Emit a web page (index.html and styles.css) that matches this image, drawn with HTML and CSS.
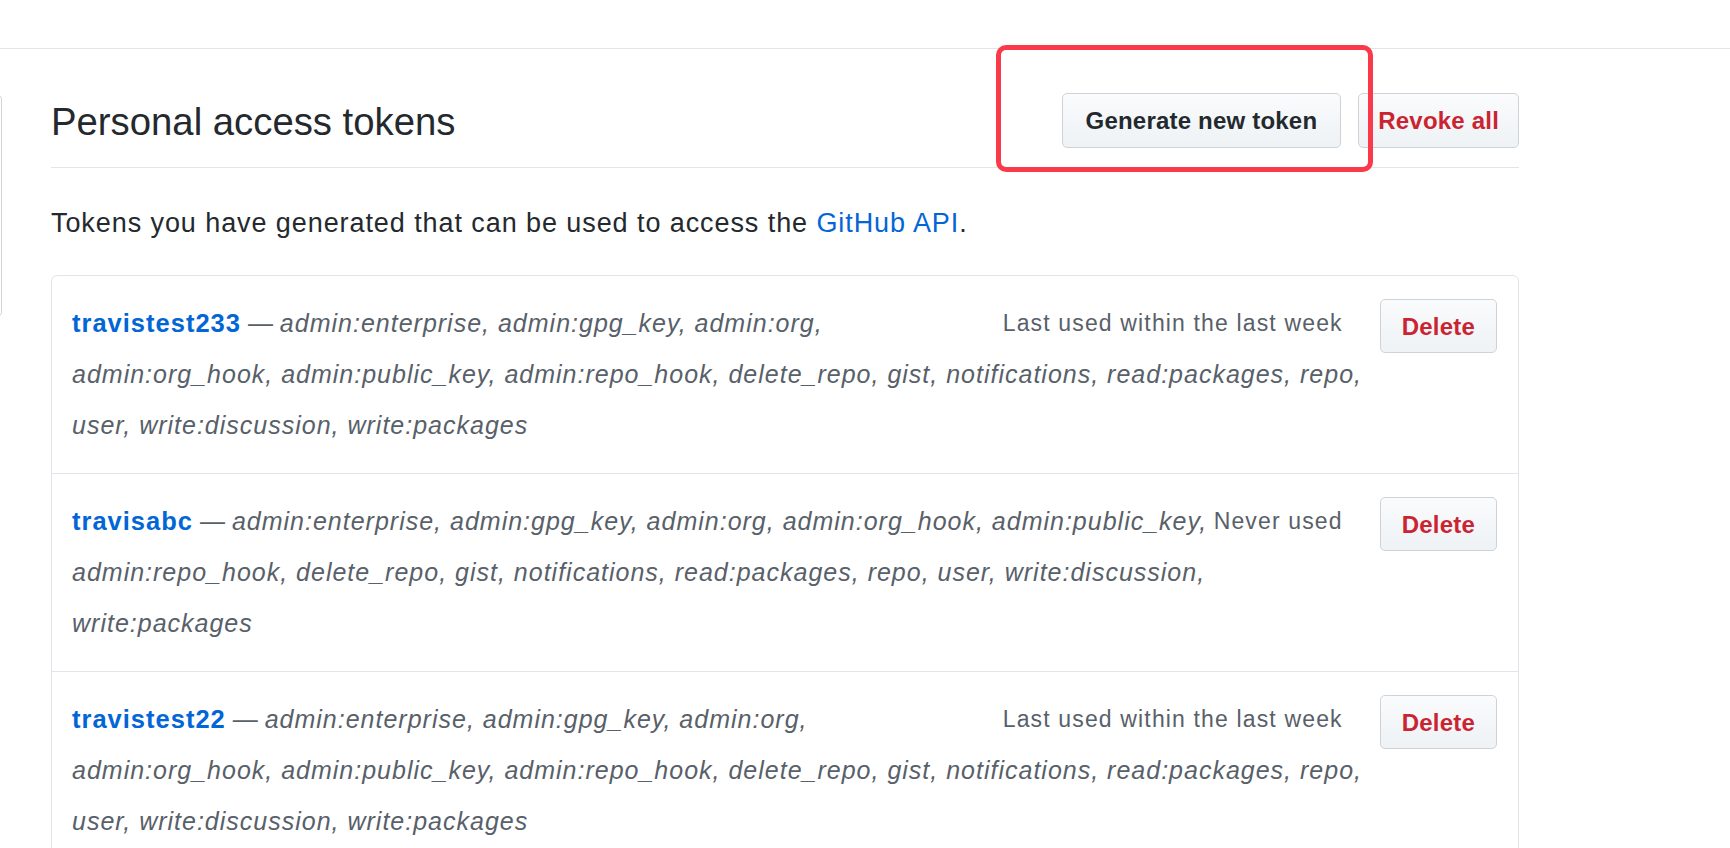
FILE: index.html
```html
<!DOCTYPE html>
<html lang="en">
<head>
<meta charset="utf-8">
<title>Personal access tokens</title>
<link rel="stylesheet" href="styles.css">
</head>
<body>
<header class="topbar"></header>
<div class="layout">
  <aside class="sidebar"></aside>
  <main class="main">
    <div class="subhead">
      <h2 class="subhead-heading">Personal access tokens</h2>
      <div class="subhead-actions">
        <a class="btn btn-generate">Generate new token</a>
        <a class="btn btn-danger btn-revoke">Revoke all</a>
      </div>
    </div>
    <p class="intro">Tokens you have generated that can be used to access the <a class="link">GitHub API</a>.</p>
    <div class="listgroup">
      <div class="token">
        <a class="btn btn-danger btn-delete">Delete</a>
        <span class="last-used">Last used within the last week</span>
        <div class="token-desc"><a class="token-name">travistest233</a> <span class="dash">—</span> <em class="scopes">admin:enterprise, admin:gpg_key, admin:org,<br>admin:org_hook, admin:public_key, admin:repo_hook, delete_repo, gist, notifications, read:packages, repo,<br>user, write:discussion, write:packages</em></div>
      </div>
      <div class="token">
        <a class="btn btn-danger btn-delete">Delete</a>
        <span class="last-used">Never used</span>
        <div class="token-desc"><a class="token-name">travisabc</a> <span class="dash">—</span> <em class="scopes">admin:enterprise, admin:gpg_key, admin:org, admin:org_hook, admin:public_key,<br>admin:repo_hook, delete_repo, gist, notifications, read:packages, repo, user, write:discussion,<br>write:packages</em></div>
      </div>
      <div class="token">
        <a class="btn btn-danger btn-delete">Delete</a>
        <span class="last-used">Last used within the last week</span>
        <div class="token-desc"><a class="token-name">travistest22</a> <span class="dash">—</span> <em class="scopes">admin:enterprise, admin:gpg_key, admin:org,<br>admin:org_hook, admin:public_key, admin:repo_hook, delete_repo, gist, notifications, read:packages, repo,<br>user, write:discussion, write:packages</em></div>
      </div>
    </div>
  </main>
</div>
<div class="annotation"></div>
</body>
</html>
```
FILE: styles.css
```css
html, body {
  margin: 0;
  padding: 0;
  background: #ffffff;
}

body {
  font-family: "Liberation Sans", Arial, sans-serif;
  color: #24292e;
  overflow: hidden;
  height: 848px;
  position: relative;
}

.topbar {
  height: 48px;
  border-bottom: 1px solid #e1e4e8;
}

.layout {
  display: flex;
  align-items: flex-start;
}

.sidebar {
  flex: none;
  width: 8px;
  height: 221px;
  margin-left: -8px;
  margin-top: 45px;
  border: 1px solid #d1d5da;
  border-radius: 6px;
}

.main {
  flex: none;
  width: 1468px;
  margin-left: 49px;
  padding-top: 44px;
}

.subhead {
  display: flex;
  align-items: center;
  padding-bottom: 19px;
  border-bottom: 1px solid #e1e4e8;
}

.subhead-heading {
  flex: 1;
  margin: 0;
  padding-top: 2px;
  font-size: 38.3px;
  font-weight: 400;
  line-height: 1.2;
  color: #24292e;
}

.subhead-actions {
  display: flex;
  gap: 17px;
}

.btn {
  display: inline-flex;
  align-items: center;
  justify-content: center;
  box-sizing: border-box;
  height: 55px;
  padding: 0 21px;
  font-size: 24px;
  font-weight: 700;
  letter-spacing: 0.2px;
  color: #24292e;
  background-image: linear-gradient(-180deg, #fafbfc 0%, #eff3f6 90%);
  border: 1px solid #cfd3d7;
  border-radius: 5px;
  white-space: nowrap;
}

.btn-generate {
  padding: 0 23px;
}

.btn-revoke {
  padding: 0 19px;
}

.btn-danger {
  color: #cb2431;
}

.intro {
  margin: 35px 0 32px;
  font-size: 27px;
  line-height: 40px;
  letter-spacing: 0.92px;
  color: #24292e;
}

.link {
  color: #0366d6;
}

.listgroup {
  border: 1px solid #e1e4e8;
  border-radius: 6px;
}

.token {
  padding: 22px 21px 22px 20px;
  font-size: 25px;
  line-height: 51px;
  color: #586069;
}

.token + .token {
  border-top: 1px solid #e1e4e8;
}

.btn-delete {
  float: right;
  height: 54px;
  margin-top: 1px;
  padding: 0 21px;
}

.last-used {
  float: right;
  margin-right: 37px;
  margin-left: -24px;
  font-size: 23px;
  letter-spacing: 1.15px;
  color: #586069;
}

.token-desc {
  white-space: normal;
}

.token-name {
  font-size: 25.5px;
  font-weight: 700;
  letter-spacing: 1px;
  color: #0366d6;
}

.dash {
  color: #586069;
  letter-spacing: 0;
}

.scopes {
  font-style: italic;
  letter-spacing: 1px;
  color: #586069;
}

.annotation {
  position: absolute;
  left: 996px;
  top: 45px;
  width: 377px;
  height: 127px;
  box-sizing: border-box;
  border: 5px solid #fa3a4a;
  border-radius: 10px;
  pointer-events: none;
}
```
